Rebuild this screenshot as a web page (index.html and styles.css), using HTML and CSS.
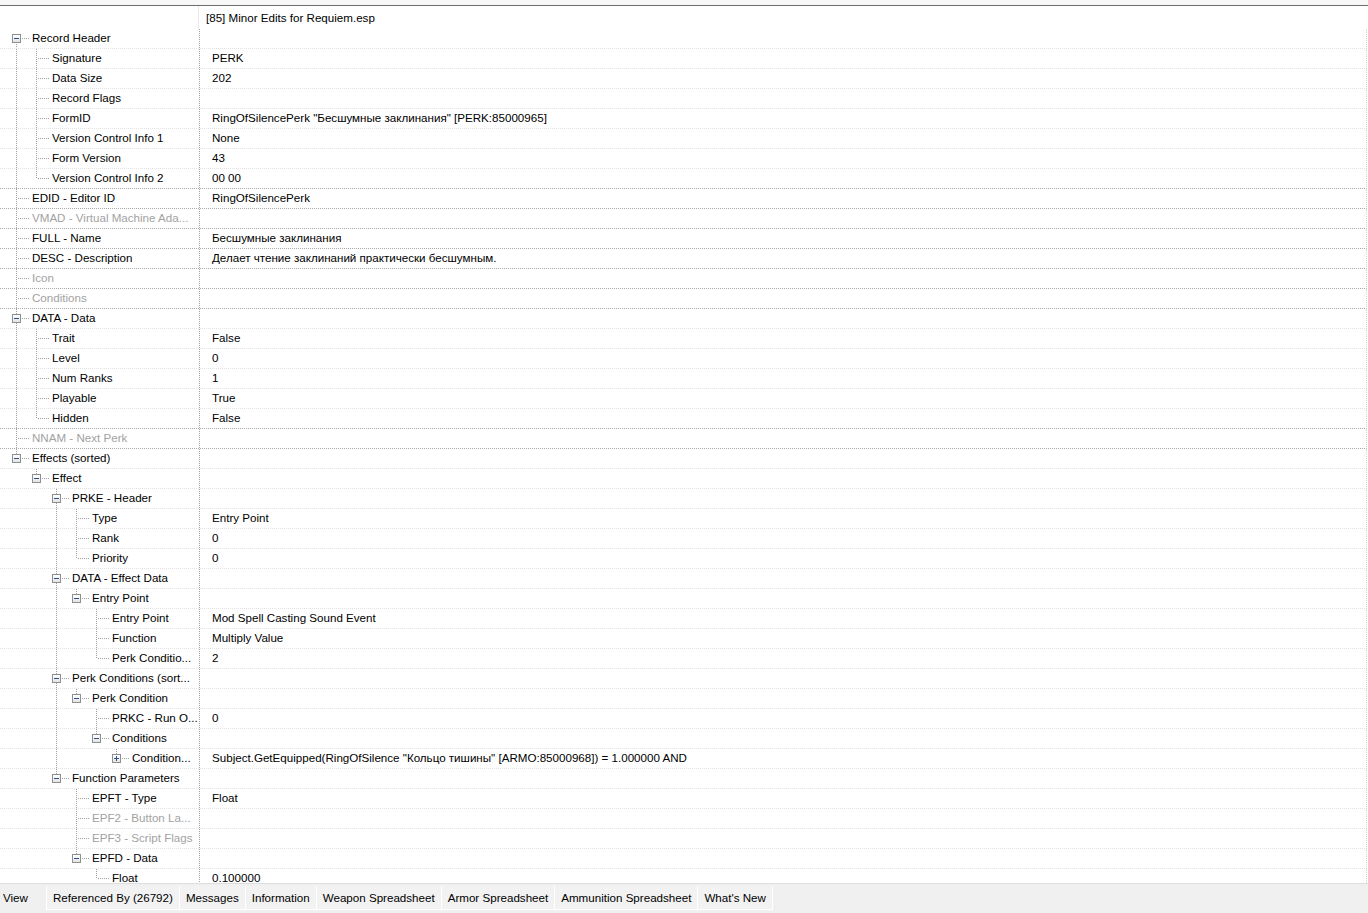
FILE: index.html
```html
<html>
<head>
<meta name="viewport" content="width=device-width, initial-scale=1">
<link rel="stylesheet" href="styles.css">
</head>
<body>
<div class="top-strip"></div>
<div class="view">
  <div class="hdr">
    <div class="hdr-left"></div>
    <div class="hdr-right">[85] Minor Edits for Requiem.esp</div>
  </div>
  <div id="rows"></div>
</div>
<div class="tabbar">
  <div class="viewlbl">View</div>
  <div class="tab">Referenced By (26792)</div>
  <div class="tab">Messages</div>
  <div class="tab">Information</div>
  <div class="tab">Weapon Spreadsheet</div>
  <div class="tab">Armor Spreadsheet</div>
  <div class="tab">Ammunition Spreadsheet</div>
  <div class="tab">What's New</div>
  <div class="tab tab-end"></div>
</div>
<script>
// [level, label, value, flags]  flags: o = open box, c = closed box, x = greyed out
var data = [
  [0, "Record Header", "", "o"],
  [1, "Signature", "PERK"],
  [1, "Data Size", "202"],
  [1, "Record Flags", ""],
  [1, "FormID", "RingOfSilencePerk \"Бесшумные заклинания\" [PERK:85000965]"],
  [1, "Version Control Info 1", "None"],
  [1, "Form Version", "43"],
  [1, "Version Control Info 2", "00 00"],
  [0, "EDID - Editor ID", "RingOfSilencePerk"],
  [0, "VMAD - Virtual Machine Ada...", "", "x"],
  [0, "FULL - Name", "Бесшумные заклинания"],
  [0, "DESC - Description", "Делает чтение заклинаний практически бесшумным."],
  [0, "Icon", "", "x"],
  [0, "Conditions", "", "x"],
  [0, "DATA - Data", "", "o"],
  [1, "Trait", "False"],
  [1, "Level", "0"],
  [1, "Num Ranks", "1"],
  [1, "Playable", "True"],
  [1, "Hidden", "False"],
  [0, "NNAM - Next Perk", "", "x"],
  [0, "Effects (sorted)", "", "o"],
  [1, "Effect", "", "o"],
  [2, "PRKE - Header", "", "o"],
  [3, "Type", "Entry Point"],
  [3, "Rank", "0"],
  [3, "Priority", "0"],
  [2, "DATA - Effect Data", "", "o"],
  [3, "Entry Point", "", "o"],
  [4, "Entry Point", "Mod Spell Casting Sound Event"],
  [4, "Function", "Multiply Value"],
  [4, "Perk Conditio...", "2"],
  [2, "Perk Conditions (sort...", "", "o"],
  [3, "Perk Condition", "", "o"],
  [4, "PRKC - Run O...", "0"],
  [4, "Conditions", "", "o"],
  [5, "Condition...", "Subject.GetEquipped(RingOfSilence \"Кольцо тишины\" [ARMO:85000968]) = 1.000000 AND", "c"],
  [2, "Function Parameters", "", "o"],
  [3, "EPFT - Type", "Float"],
  [3, "EPF2 - Button La...", "", "x"],
  [3, "EPF3 - Script Flags", "", "x"],
  [3, "EPFD - Data", "", "o"],
  [4, "Float", "0.100000"]
];

function hasNext(i) {
  var lvl = data[i][0];
  for (var j = i + 1; j < data.length; j++) {
    if (data[j][0] < lvl) return false;
    if (data[j][0] == lvl) return true;
  }
  return false;
}

var box = document.getElementById("rows");
var path = [];
data.forEach(function(d, i) {
  var lvl = d[0], flags = d[3] || "";
  path[lvl] = i;
  var row = document.createElement("div");
  row.className = "row";
  if (data[i + 1] && data[i + 1][0] == 0) row.className += " dark";

  var name = document.createElement("div");
  name.className = "name";
  for (var k = 0; k < lvl; k++) {
    var g = document.createElement("span");
    g.className = hasNext(path[k]) ? "g line" : "g";
    name.appendChild(g);
  }
  var own = document.createElement("span");
  if (i == 0) own.className = "own first";
  else own.className = hasNext(i) ? "own mid" : "own end";
  if (flags.indexOf("o") >= 0 || flags.indexOf("c") >= 0) {
    var b = document.createElement("span");
    b.className = flags.indexOf("c") >= 0 ? "box plus" : "box";
    own.appendChild(b);
  }
  name.appendChild(own);

  var label = document.createElement("span");
  label.className = flags.indexOf("x") >= 0 ? "label off" : "label";
  label.textContent = d[1];
  name.appendChild(label);
  row.appendChild(name);

  var val = document.createElement("div");
  val.className = "value";
  val.textContent = d[2];
  row.appendChild(val);
  box.appendChild(row);
});
</script>
</body>
</html>
```
FILE: styles.css
```css
* {
  box-sizing: border-box;
}

html, body {
  margin: 0;
}

body {
  height: 913px;
  overflow: hidden;
  display: flex;
  flex-direction: column;
  background: #fff;
  color: #000;
  font-family: "Liberation Sans", Arial, sans-serif;
  font-size: 11.6px;
}

.top-strip {
  flex: none;
  height: 6px;
  background: #f8f8f8;
  border-bottom: 1px solid #6d6d6d;
}

.view {
  flex: 1;
  overflow: hidden;
}

.hdr {
  display: flex;
  height: 23px;
}

.hdr-left {
  width: 199px;
  border-right: 1px solid #e6e6e6;
}

.hdr-right {
  padding-left: 7px;
  line-height: 24px;
  white-space: nowrap;
}

.row {
  display: flex;
  height: 20px;
  margin-right: 1px;
  border-bottom: 1px dotted #e2e2e2;
  border-right: 1px dotted #d6d6d6;
}

.row.dark {
  border-bottom-color: #a8a8a8;
}

.name {
  flex: none;
  width: 200px;
  display: flex;
  border-right: 1px dotted #a0a0a0;
}

.g {
  flex: none;
  width: 20px;
}

.g.line {
  background: repeating-linear-gradient(#a0a0a0 0 1px, transparent 1px 2px) 16px 0 / 1px 100% no-repeat;
}

.own {
  flex: none;
  width: 32px;
  display: flex;
  align-items: center;
  background-repeat: no-repeat;
}

.own.mid {
  background-image:
    repeating-linear-gradient(to right, #a0a0a0 0 1px, transparent 1px 2px),
    repeating-linear-gradient(#a0a0a0 0 1px, transparent 1px 2px);
  background-position: 18px 9px, 16px 0;
  background-size: 12px 1px, 1px 100%;
}

.own.end {
  background-image:
    repeating-linear-gradient(to right, #a0a0a0 0 1px, transparent 1px 2px),
    repeating-linear-gradient(#a0a0a0 0 1px, transparent 1px 2px);
  background-position: 18px 9px, 16px 0;
  background-size: 12px 1px, 1px 10px;
}

.own.first {
  background-image:
    repeating-linear-gradient(to right, #a0a0a0 0 1px, transparent 1px 2px),
    repeating-linear-gradient(#a0a0a0 0 1px, transparent 1px 2px);
  background-position: 18px 9px, 16px 9px;
  background-size: 12px 1px, 1px 11px;
}

.box {
  width: 9px;
  height: 9px;
  margin-left: 12px;
  border: 1px solid #8e8f8f;
  background:
    linear-gradient(#2c4f8e, #2c4f8e) center / 5px 1px no-repeat,
    linear-gradient(#fff, #e4e4e4);
}

.box.plus {
  background:
    linear-gradient(#2c4f8e, #2c4f8e) center / 5px 1px no-repeat,
    linear-gradient(#2c4f8e, #2c4f8e) center / 1px 5px no-repeat,
    linear-gradient(#fff, #e4e4e4);
}

.label {
  flex: 1;
  min-width: 0;
  overflow: hidden;
  white-space: nowrap;
  line-height: 18px;
}

.label.off {
  color: #a2a2a2;
}

.value {
  padding-left: 12px;
  line-height: 18px;
  white-space: nowrap;
}

.tabbar {
  flex: none;
  height: 30px;
  display: flex;
  align-items: flex-start;
  background: #f0f0f0;
  border-top: 1px solid #dedede;
  padding-top: 2px;
}

.viewlbl {
  width: 46px;
  padding-left: 3px;
  line-height: 24px;
}

.tab {
  padding: 0 6px 0 6px;
  line-height: 23px;
  height: 24px;
  border-left: 1px solid #fff;
  border-bottom: 1px solid #fff;
  background: #f2f2f2;
  white-space: nowrap;
}

.tab-end {
  padding: 0;
  width: 1px;
  background: #f0f0f0;
}
```
